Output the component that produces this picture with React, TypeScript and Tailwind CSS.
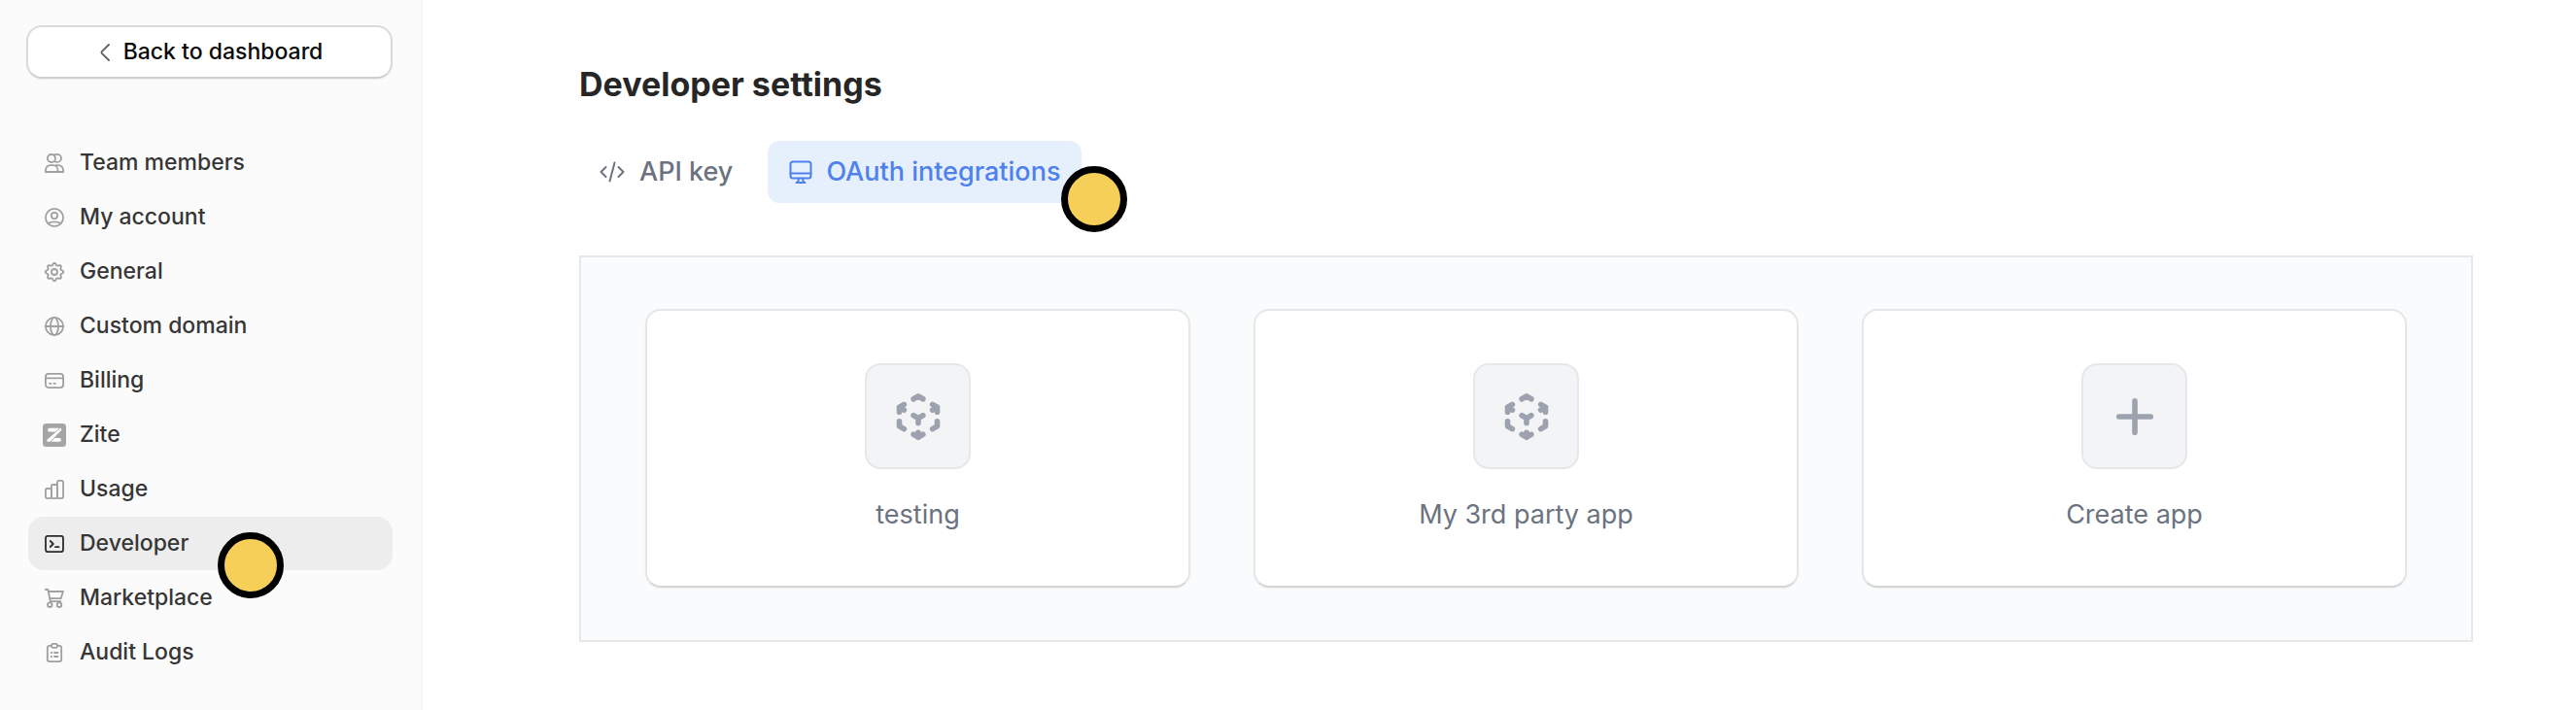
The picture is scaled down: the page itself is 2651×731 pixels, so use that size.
import type { ReactNode } from "react";

function Icon({ children, className }: { children: ReactNode; className: string }) {
  return (
    <svg viewBox="0 0 20 20" fill="none" stroke="currentColor" strokeWidth="1.8" strokeLinecap="round" strokeLinejoin="round" className={className} aria-hidden="true">
      {children}
    </svg>
  );
}

const gearPath = Array.from({ length: 65 }, (_, i) => {
  const a = (i / 64) * Math.PI * 2;
  const r = 8.1 + Math.tanh(2 * Math.cos(a * 8)) * 1.05;
  return `${i === 0 ? "M" : "L"}${(10 + r * Math.sin(a)).toFixed(2)} ${(10 - r * Math.cos(a)).toFixed(2)}`;
}).join("") + "Z";

type Item = { label: string; icon: ReactNode; active?: boolean };

const items: Item[] = [
  {
    label: "Team members",
    icon: (
      <>
        <rect x="2.9" y="1" width="8" height="8" rx="3.8" />
        <path d="M10.2 1.4C11 1 12 .9 13 .9a3.9 3.9 0 0 1 0 8c-1 0-2-.2-2.8-.6" />
        <path d="M.9 19v-1.8a5 5 0 0 1 5-5h2.6a5 5 0 0 1 5 5V19Z" />
        <path d="M11.5 12.2h2.6a5 5 0 0 1 5 5V19h-5.6" />
      </>
    ),
  },
  {
    label: "My account",
    icon: (
      <>
        <circle cx="10" cy="10" r="9.1" />
        <circle cx="10" cy="8" r="3.1" />
        <path d="M3.6 15.9c1.8-1 4-1.5 6.4-1.5s4.6.5 6.4 1.5" />
      </>
    ),
  },
  {
    label: "General",
    icon: (
      <>
        <path d={gearPath} />
        <circle cx="10" cy="10" r="3" />
      </>
    ),
  },
  {
    label: "Custom domain",
    icon: (
      <>
        <circle cx="10" cy="10" r="9.1" />
        <ellipse cx="10" cy="10" rx="4" ry="9.1" />
        <path d="M1 10h18" />
      </>
    ),
  },
  {
    label: "Billing",
    icon: (
      <>
        <rect x=".9" y="2.9" width="18.2" height="14.2" rx="3" />
        <path d="M1 7.4h18M5 12.8h1.5M9.5 12.8H11" />
      </>
    ),
  },
  { label: "Zite", icon: null },
  {
    label: "Usage",
    icon: (
      <>
        <rect x=".9" y="9" width="6" height="10.1" rx="1.5" />
        <rect x="6.9" y="5" width="6" height="14.1" rx="1.5" />
        <rect x="12.9" y=".9" width="6.2" height="18.2" rx="1.8" />
      </>
    ),
  },
  {
    label: "Developer",
    active: true,
    icon: (
      <>
        <rect x="1" y="1.9" width="18" height="16.2" rx="2" />
        <path d="M5.8 7l3 3-3 3M11 13.2h3.5" />
      </>
    ),
  },
  {
    label: "Marketplace",
    icon: (
      <>
        <path d="M.8 1h2.6l2.4 12.2h10.4" />
        <path d="M3.8 3H19l-2.4 7.2H5.2" />
        <circle cx="5.3" cy="16.7" r="2.3" />
        <circle cx="15" cy="16.7" r="2.3" />
      </>
    ),
  },
  {
    label: "Audit Logs",
    icon: (
      <>
        <path d="M7 2.8H4.8a2 2 0 0 0-2 2v12.3a2 2 0 0 0 2 2h10.4a2 2 0 0 0 2-2V4.8a2 2 0 0 0-2-2H13" />
        <rect x="7" y=".9" width="6" height="4" rx="1.6" />
        <path d="M6.7 10h.5M10 10h3.5M6.7 14h.5M10 14h3.5" />
      </>
    ),
  },
];

function ZiteIcon() {
  return (
    <svg viewBox="0 0 24 24" className="size-6" aria-hidden="true">
      <rect width="24" height="24" rx="3.5" fill="#a6a6a6" />
      <g fill="#fff">
        <path d="M7 4.8H17L13.2 8.6H7A1.9 1.9 0 0 1 7 4.8Z" />
        <path d="M18.3 4.8q.8 0 .8.8v1.5L7.6 18.8H5.2q-.8 0-.8-.8v-1.2Z" />
        <path d="M12.2 15H17A1.9 1.9 0 0 1 17 18.8H8.6Z" />
      </g>
    </svg>
  );
}

function CubeIcon() {
  return (
    <svg viewBox="0 0 24 24" fill="none" stroke="currentColor" strokeWidth="2.6" strokeLinecap="round" strokeLinejoin="round" className="size-[52px]" aria-hidden="true">
      <path d="M21 7.5l-2.25-1.313M21 7.5v2.25m0-2.25l-2.25 1.313M3 7.5l2.25-1.313M3 7.5l2.25 1.313M3 7.5v2.25m9 3l2.25-1.313M12 12.75l-2.25-1.313M12 12.75V15m0 6.75l2.25-1.313M12 21.75V19.5m0 2.25l-2.25-1.313m0-16.875L12 2.25l2.25 1.313M21 14.25v2.25l-2.25 1.313m-13.5 0L3 16.5v-2.25" />
    </svg>
  );
}

function PlusIcon() {
  return (
    <svg viewBox="0 0 24 24" fill="none" stroke="currentColor" strokeWidth="2.6" strokeLinecap="round" className="size-[52px]" aria-hidden="true">
      <path d="M12 4.5v15M4.5 12h15" />
    </svg>
  );
}

function Marker({ className }: { className: string }) {
  return <span className={`pointer-events-none absolute z-10 size-[68px] rounded-full border-7 border-black bg-[#f5cf58] ${className}`} />;
}

const apps = [
  { name: "testing", icon: <CubeIcon /> },
  { name: "My 3rd party app", icon: <CubeIcon /> },
  { name: "Create app", icon: <PlusIcon /> },
];

export default function App() {
  return (
    <div className="flex min-h-screen bg-white font-['Inter',sans-serif]">
      <aside className="w-[435px] shrink-0 border-r-2 border-[#f5f5f5] bg-[#fbfbfb] pt-[26px] pr-[29px] pb-8 pl-[27px]">
        <button type="button" className="flex h-[55px] w-full items-center justify-center gap-[14px] rounded-2xl border-2 border-[#dadada] border-b-[#cfcfcf] bg-white pl-1 text-[23px] font-medium text-[#0a0a0a] shadow-xs">
          <svg viewBox="0 0 10 18" fill="none" stroke="#5f5f5f" strokeWidth="1.8" strokeLinecap="round" strokeLinejoin="round" className="h-[18px] w-[10px]" aria-hidden="true">
            <path d="M9 1 2 7.8q-1 1.2 0 2.4L9 17" />
          </svg>
          Back to dashboard
        </button>
        <nav className="mt-[59px] flex flex-col gap-px pl-0.5">
          {items.map((item) => (
            <div key={item.label} className="relative">
              <a
                href="#"
                aria-current={item.active ? "page" : undefined}
                className={`flex h-[55px] items-center gap-[14px] rounded-2xl pl-[15px] text-[23px] font-medium text-[#363636] ${item.active ? "bg-[#ededed]" : ""}`}
              >
                <span className="flex size-6 shrink-0 items-center justify-center">
                  {item.icon ? <Icon className={item.active ? "size-5 text-[#2b2b2b]" : "size-5 text-[#a0a0a0]"}>{item.icon}</Icon> : <ZiteIcon />}
                </span>
                {item.label}
              </a>
              {item.active && <Marker className="top-4 left-[195px]" />}
            </div>
          ))}
        </nav>
      </aside>

      <main className="min-w-0 flex-1 pt-[63px] pr-[106px] pb-[70px] pl-[161px]">
        <h1 className="text-[34px] leading-[48px] font-bold text-[#262626]">Developer settings</h1>
        <div className="mt-[34px] flex gap-4" role="tablist">
          <button type="button" role="tab" aria-selected="false" className="flex h-16 items-center gap-[14px] rounded-xl px-5 text-[27px] font-medium text-[#6b7280]">
            <svg viewBox="0 0 28 24" fill="none" stroke="currentColor" strokeWidth="2" strokeLinecap="round" strokeLinejoin="round" className="h-6 w-7" aria-hidden="true">
              <path d="M7.5 7 2.5 12l5 5M20.5 7l5 5-5 5M16.5 2.5l-5 19" />
            </svg>
            API key
          </button>
          <div className="relative">
            <button type="button" role="tab" aria-selected="true" className="flex h-16 items-center gap-[14px] rounded-xl bg-[#e6effc] px-[22px] text-[27px] font-medium text-[#4f81ee]">
              <svg viewBox="0 0 24 24" fill="none" stroke="currentColor" strokeWidth="2" strokeLinecap="round" strokeLinejoin="round" className="size-6" aria-hidden="true">
                <rect x="1.5" y="1.5" width="21" height="17" rx="2.5" />
                <path d="M1.5 13.5h21M10 18.5 9 23M14 18.5l1 4.5M7.5 23h9" />
              </svg>
              OAuth integrations
            </button>
            <Marker className="top-[26px] -right-[47px]" />
          </div>
        </div>
        <section className="mt-[54px] grid grid-cols-3 gap-[65px] border-2 border-[#e6e7e9] bg-[#fafbfd] px-[66px] pt-[53px] pb-[54px]">
          {apps.map((app) => (
            <button
              key={app.name}
              type="button"
              className="flex flex-col items-center gap-7 rounded-2xl border-2 border-[#e5e6e6] border-b-[#d4d6d6] bg-white py-[54px] text-[27px] leading-[38px] text-[#6b7280] shadow-xs"
            >
              <span className="flex size-[109px] items-center justify-center rounded-2xl border-2 border-[#e5e7eb] bg-[#f3f4f6] text-[#9ca3af]">{app.icon}</span>
              {app.name}
            </button>
          ))}
        </section>
      </main>
    </div>
  );
}
